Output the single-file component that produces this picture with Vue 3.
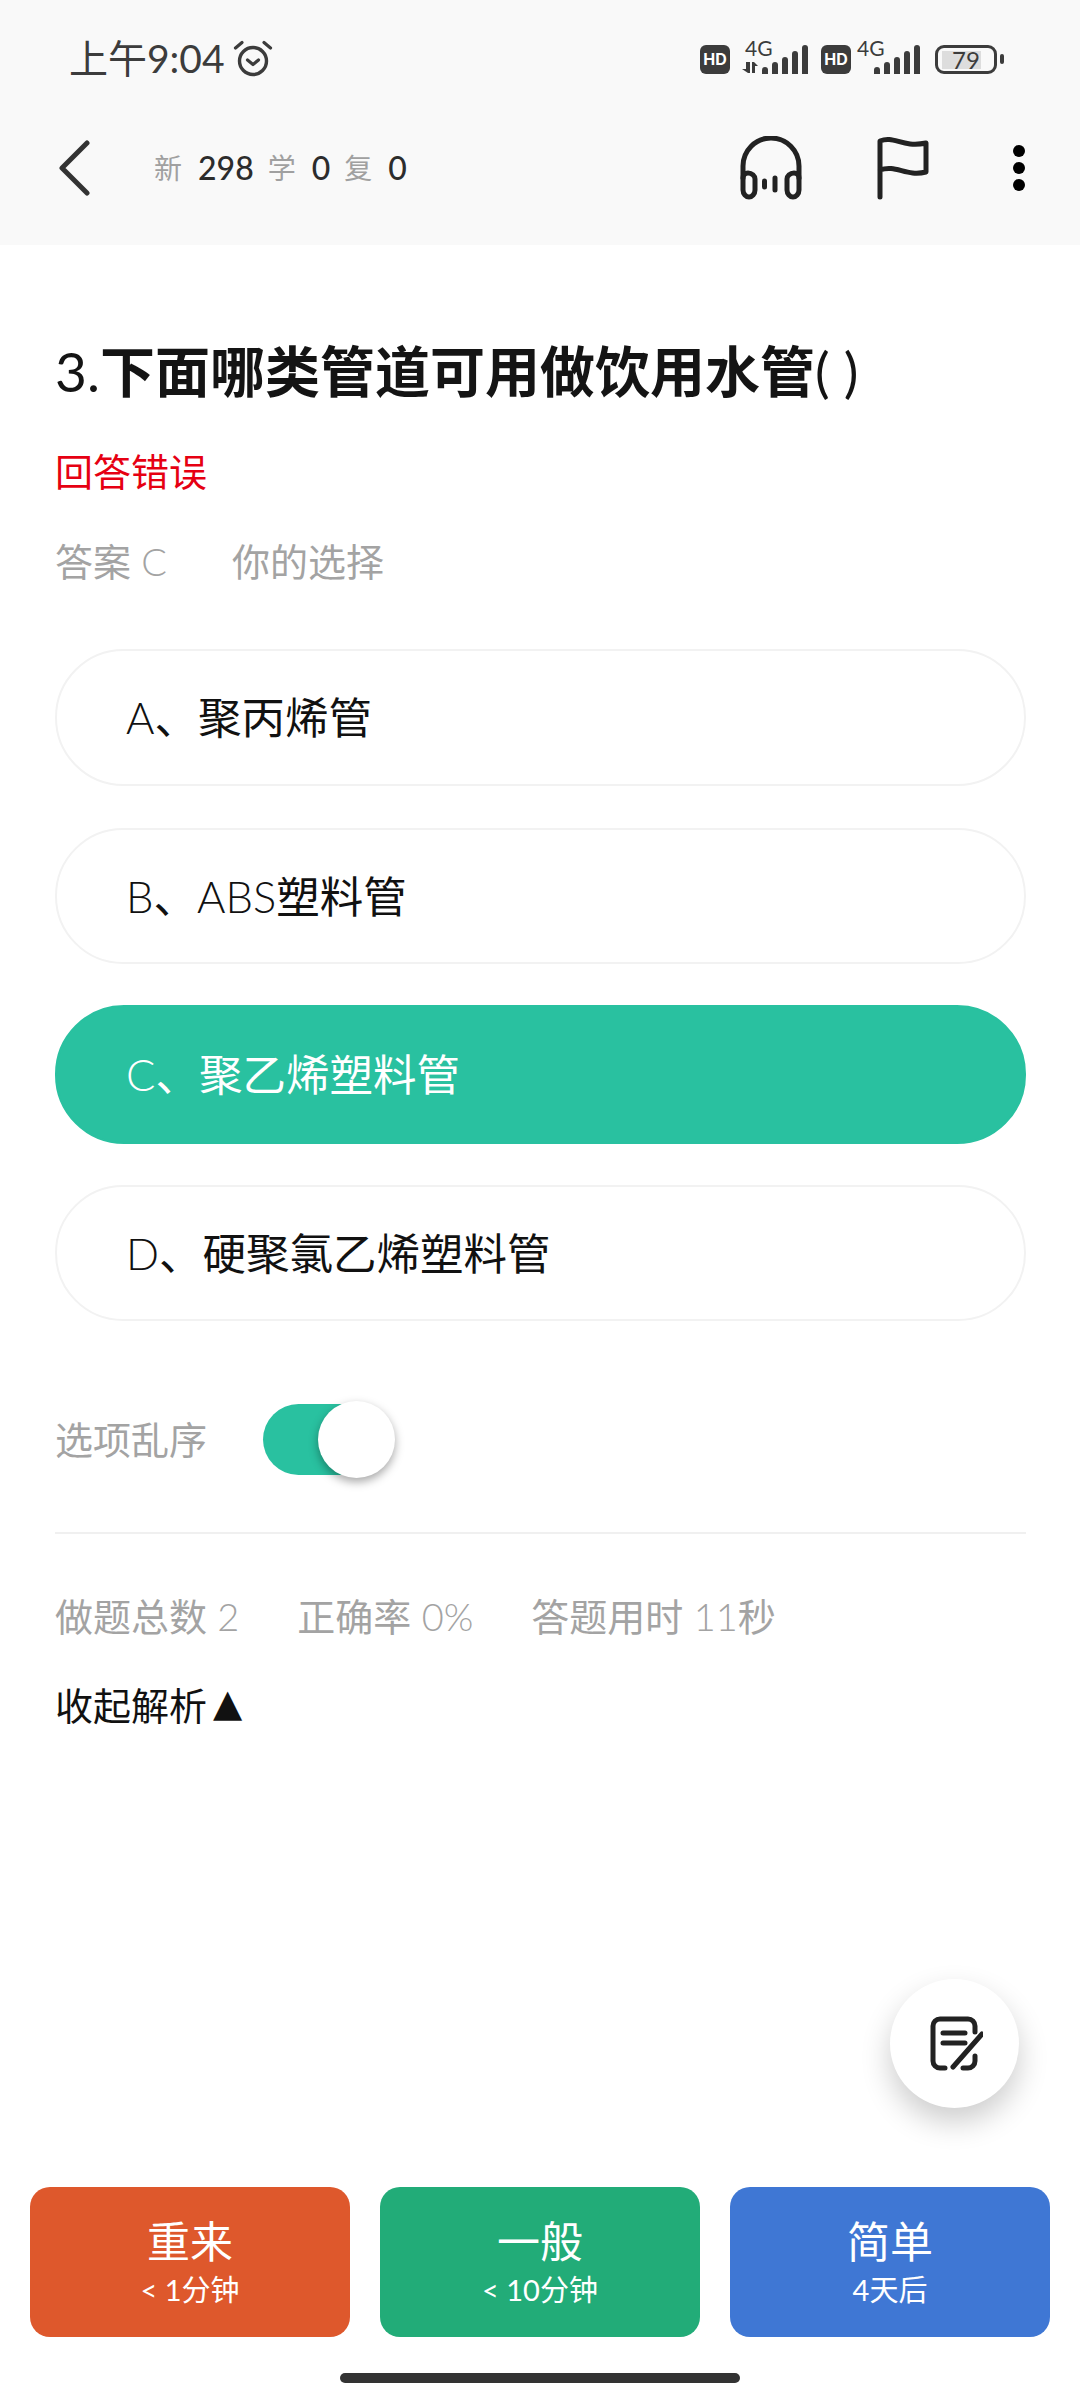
<template>
  <div class="page">
    <header class="top">
      <div class="status">
        <div class="time">
          <span class="clock">上午9:04</span>
          <svg class="alarm" width="40" height="38" viewBox="0 0 40 38" fill="none" stroke="#3c3c3c" stroke-linecap="round" stroke-linejoin="round">
            <circle cx="20" cy="21" r="13.5" stroke-width="3.4" />
            <path d="M14.5 20l5.5 4.5 5.5-4.5" stroke-width="3.2" />
            <path d="M2.5 8L9 2.5M37.5 8L31 2.5" stroke-width="3.2" />
          </svg>
        </div>
        <div class="indicators">
          <span class="hd">HD</span>
          <div class="net first">
            <span class="net-label">4G</span>
            <svg class="arrows" width="16" height="12" viewBox="0 0 16 12" fill="#3c3c3c">
              <path d="M8 0v11H6L0 7h4V0zM10 11V0h2l4 4h-3v7z" />
            </svg>
            <div class="bars">
              <i v-for="h in barHeights" :key="h" :style="{ height: h + 'px' }"></i>
            </div>
          </div>
          <span class="hd">HD</span>
          <div class="net">
            <span class="net-label">4G</span>
            <div class="bars">
              <i v-for="h in barHeights" :key="h" :style="{ height: h + 'px' }"></i>
            </div>
          </div>
          <div class="battery">
            <div class="cell"><div class="fill"></div><span>79</span></div>
            <div class="nub"></div>
          </div>
        </div>
      </div>
      <div class="toolbar">
        <svg class="back" width="32" height="56" viewBox="0 0 32 56" fill="none" stroke="#333" stroke-width="5" stroke-linecap="round" stroke-linejoin="round">
          <path d="M28 3L3 28l25 25" />
        </svg>
        <div class="counts">
          <span class="lbl">新</span><b>298</b>
          <span class="lbl">学</span><b>0</b>
          <span class="lbl">复</span><b>0</b>
        </div>
        <div class="actions">
          <svg class="headset" width="62" height="64" viewBox="0 0 62 64" fill="none" stroke="#222" stroke-width="5" stroke-linecap="round" stroke-linejoin="round">
            <path d="M3 42V30a28 28 0 0 1 56 0v12" />
            <path d="M3 42c0-3 2-5 5-5 4 0 7 3 7 6v11c0 4-3 7-6 7s-6-3-6-7zM59 42c0-3-2-5-5-5-4 0-7 3-7 6v11c0 4 3 7 6 7s6-3 6-7z" />
            <path d="M24.500 45v6M35 42v12" />
          </svg>
          <svg class="flag" width="52" height="64" viewBox="0 0 52 64" fill="none" stroke="#222" stroke-width="5" stroke-linecap="round" stroke-linejoin="round">
            <path d="M3 61V5c14-6 22 7 46 2v29c-20 5-30-8-46-2" />
          </svg>
          <div class="dots"><i></i><i></i><i></i></div>
        </div>
      </div>
    </header>

    <main class="body">
      <h1 class="title"><span class="plain">3.</span>下面哪类管道可用做饮用水管<span class="plain">( )</span></h1>
      <div class="wrong">回答错误</div>
      <div class="answer"><span>答案 C</span><span>你的选择</span></div>

      <div class="options">
        <div v-for="opt in options" :key="opt.text" class="option" :class="{ right: opt.right }">{{ opt.text }}</div>
      </div>

      <div class="shuffle">
        <span class="shuffle-label">选项乱序</span>
        <div class="switch"><div class="thumb"></div></div>
      </div>

      <div class="stats">
        <span>做题总数 2</span><span>正确率 0%</span><span>答题用时 11秒</span>
      </div>
      <div class="collapse">收起解析<span class="arrow">▲</span></div>
    </main>

    <button class="fab">
      <svg width="56" height="58" viewBox="-3 0 56 58" fill="none" stroke="#222" stroke-width="5" stroke-linecap="round" stroke-linejoin="round">
        <path d="M15 53H10a7 7 0 0 1-7-7V11a7 7 0 0 1 7-7h28a7 7 0 0 1 7 7v6" />
        <path d="M45 41v5a7 7 0 0 1-7 7h-5" />
        <path d="M13 18h22M13 28h22" />
        <path d="M23 52L52 19" />
      </svg>
    </button>

    <div class="grades">
      <div v-for="g in grades" :key="g.name" class="grade" :style="{ background: g.color }">
        <div class="name">{{ g.name }}</div>
        <div class="when">{{ g.when }}</div>
      </div>
    </div>
    <div class="home"></div>
  </div>
</template>

<script setup>
const barHeights = [7, 12, 17, 23, 29]

const options = [
  { text: 'A、聚丙烯管' },
  { text: 'B、ABS塑料管' },
  { text: 'C、聚乙烯塑料管', right: true },
  { text: 'D、硬聚氯乙烯塑料管' },
]

const grades = [
  { name: '重来', when: '< 1分钟', color: '#de582c' },
  { name: '一般', when: '< 10分钟', color: '#22ac78' },
  { name: '简单', when: '4天后', color: '#3f77d4' },
]
</script>

<style>
body { margin: 0; background: #fff; }
</style>

<style scoped>
.page {
  position: relative;
  width: 1080px;
  height: 2400px;
  overflow: hidden;
  background: #fff;
  font-family: "Lato Light", Lato, "Noto Sans CJK SC", sans-serif;
  color: #111;
}

.top {
  height: 245px;
  background: #f9f9f9;
}

.status {
  height: 118px;
  display: flex;
  align-items: center;
  justify-content: space-between;
  padding: 0 76px 0 69px;
}

.time {
  display: flex;
  align-items: center;
  gap: 8px;
  font-family: Lato, "Noto Sans CJK SC", sans-serif;
  font-size: 39px;
  color: #3c3c3c;
}

.clock { margin-top: -6px; }

.indicators { display: flex; align-items: center; }

.hd {
  width: 30px;
  height: 29px;
  border-radius: 6px;
  background: #3c3c3c;
  color: #fff;
  font-family: Inter, sans-serif;
  font-size: 16px;
  font-weight: 700;
  line-height: 29px;
  text-align: center;
}

.net {
  position: relative;
  width: 63px;
  height: 34px;
  margin: -4px 15px 0 6px;
}

.net.first { width: 66px; margin: -4px 13px 0 12px; }

.net-label {
  position: absolute;
  top: -3px;
  left: 0;
  font-family: Lato, sans-serif;
  font-size: 21px;
  line-height: 21px;
  color: #3c3c3c;
}

.net.first .net-label { left: 3px; }

.arrows { position: absolute; left: 0; bottom: 0; }

.bars {
  position: absolute;
  right: 0;
  bottom: 0;
  display: flex;
  align-items: flex-end;
  gap: 4px;
}

.bars i {
  width: 6px;
  background: #3c3c3c;
  border-radius: 3px 3px 0 0;
}

.battery { display: flex; align-items: center; gap: 3px; }

.cell {
  position: relative;
  width: 62px;
  height: 29px;
  box-sizing: border-box;
  border: 3px solid #3c3c3c;
  border-radius: 9px;
  font-family: Lato, sans-serif;
  font-size: 24px;
  line-height: 23px;
  text-align: center;
  color: #3c3c3c;
}

.cell span { position: relative; }

.fill {
  position: absolute;
  left: 4px;
  top: 3px;
  height: 18px;
  width: 39px;
  background: #ddd;
}

.nub {
  width: 4px;
  height: 10px;
  background: #3c3c3c;
  border-radius: 2px;
}

.toolbar {
  height: 100px;
  display: flex;
  align-items: center;
  padding: 0 55px 0 59px;
}

.counts {
  margin: -2px 0 0 63px;
  display: flex;
  align-items: center;
  font-family: Lato, "Noto Sans CJK SC", sans-serif;
  font-size: 32px;
  color: #2c2c2c;
}

.counts .lbl { font-size: 28px; color: #a0a0a0; margin-right: 16px; }
.counts b { font-weight: 500; margin-right: 14px; }

.actions {
  margin-left: auto;
  display: flex;
  align-items: center;
}

.headset { margin-right: 75px; }
.flag { margin-right: 84px; }

.dots { display: flex; flex-direction: column; gap: 5px; }
.dots i { width: 12px; height: 12px; border-radius: 50%; background: #000; }

.body { padding: 0 54px 0 55px; }

.title {
  margin: 89px 0 0;
  font-size: 55px;
  font-weight: 700;
  line-height: 74px;
  color: #141414;
}

.title .plain { font-family: Lato, sans-serif; font-weight: 400; }

.wrong {
  margin-top: 37px;
  font-size: 38px;
  line-height: 52px;
  color: #e60012;
}

.answer {
  margin-top: 38px;
  display: flex;
  gap: 65px;
  font-size: 38px;
  line-height: 52px;
  color: #a3a3a3;
}

.options {
  margin-top: 62px;
  display: flex;
  flex-direction: column;
  gap: 42px;
}

.option {
  height: 136.5px;
  box-sizing: border-box;
  border: 2px solid #f2f2f2;
  border-radius: 69px;
  padding: 0 0 3px 69px;
  display: flex;
  align-items: center;
  font-size: 43.5px;
  color: #111;
}

.option.right {
  height: 138.5px;
  margin: -1px 0;
  background: #29c1a0;
  border-color: #29c1a0;
  color: #fff;
}

.shuffle {
  margin-top: 83px;
  display: flex;
  align-items: center;
  gap: 56px;
  font-size: 38px;
  color: #a3a3a3;
}

.shuffle-label { margin-bottom: 4px; }

.switch {
  position: relative;
  width: 125px;
  height: 71px;
  border-radius: 36px;
  background: #29c1a0;
}

.thumb {
  position: absolute;
  right: -7px;
  top: -3px;
  width: 77px;
  height: 77px;
  border-radius: 50%;
  background: #fff;
  box-shadow: 0 4px 10px rgba(0, 0, 0, 0.35);
}

.stats {
  margin-top: 57px;
  border-top: 2px solid #f0f0f0;
  padding-top: 56px;
  display: flex;
  gap: 58px;
  font-size: 38px;
  line-height: 52px;
  color: #a3a3a3;
}

.collapse {
  margin-top: 37px;
  font-size: 38px;
  line-height: 52px;
  color: #111;
}

.arrow {
  margin-left: 6px;
  font-family: "DejaVu Sans", sans-serif;
  line-height: 1;
  vertical-align: 4px;
}

.fab {
  position: absolute;
  left: 890px;
  top: 1979px;
  width: 129px;
  height: 129px;
  border: none;
  padding: 0;
  border-radius: 50%;
  background: #fff;
  display: flex;
  align-items: center;
  justify-content: center;
  box-shadow: 0 14px 30px rgba(0, 0, 0, 0.2);
}

.grades {
  position: absolute;
  left: 30px;
  right: 30px;
  top: 2187px;
  display: grid;
  grid-template-columns: repeat(3, 1fr);
  gap: 30px;
}

.grade {
  height: 150px;
  border-radius: 20px;
  color: #fff;
  display: flex;
  flex-direction: column;
  align-items: center;
  justify-content: center;
  padding-top: 2px;
  box-sizing: border-box;
}

.name { font-size: 43px; line-height: 56px; }
.when { margin-top: -2px; font-family: Lato, "Noto Sans CJK SC", sans-serif; font-size: 29px; line-height: 44px; }

.home {
  position: absolute;
  left: 340px;
  top: 2373px;
  width: 400px;
  height: 10px;
  border-radius: 5px;
  background: #333;
}
</style>
